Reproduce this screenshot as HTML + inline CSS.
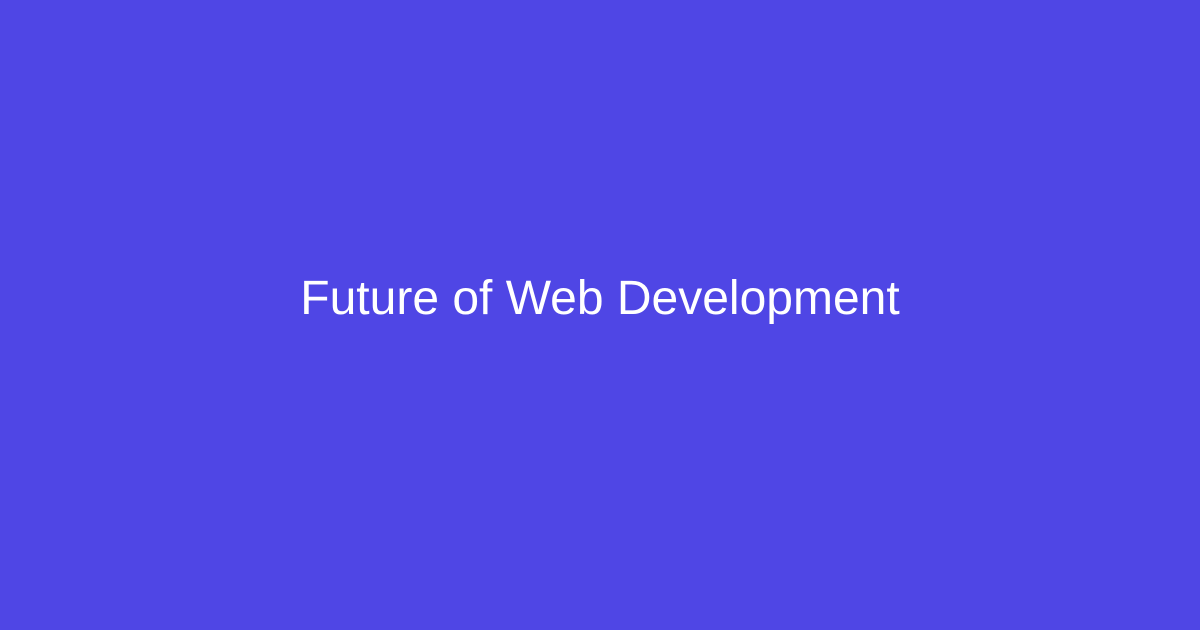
<!DOCTYPE html>
<html><head><meta charset="utf-8"><style>
html,body{margin:0;padding:0;}
body{width:1200px;height:630px;background:#4F46E5;display:flex;align-items:center;justify-content:center;overflow:hidden;}
h1{margin:0;font-family:"Liberation Sans",Arial,sans-serif;font-weight:400;font-size:48px;color:#fff;line-height:1;position:relative;top:-16px;}
</style></head><body><h1>Future of Web Development</h1></body></html>
